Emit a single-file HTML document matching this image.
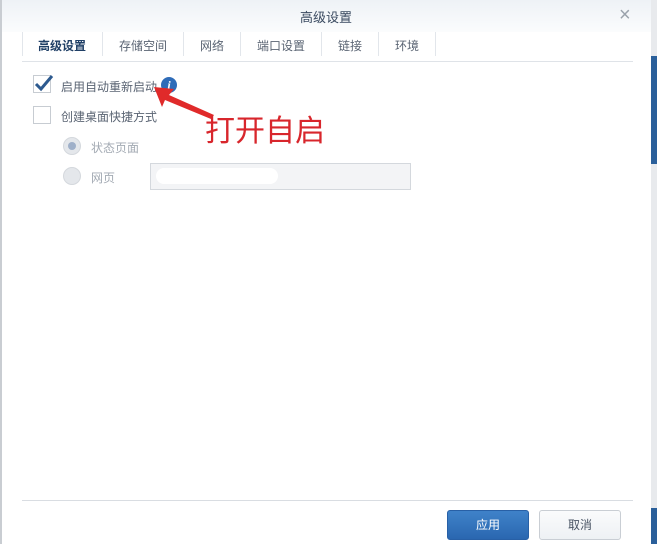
<!DOCTYPE html>
<html><head><meta charset="utf-8"><style>
body{margin:0;width:657px;height:544px;overflow:hidden;background:#fff;font-family:"Liberation Sans","Noto Sans CJK SC",sans-serif;position:relative}
.abs{position:absolute}
.t{font-size:12px;color:#5a6473;white-space:nowrap}
.tab{position:absolute;top:37px;font-size:12px;color:#5a6473}
.sep{position:absolute;top:32px;width:1px;height:24px;background:#e2e6eb}
</style></head><body>
<div class="abs" style="left:0;top:0;width:651px;height:32px;background:linear-gradient(#eef2f6,#fbfcfd)"></div>
<div class="abs" style="left:0;top:0;width:2px;height:544px;background:#c9cdd2"></div>
<div class="abs" style="left:651px;top:0;width:6px;height:544px;background:#e8eaed"></div>
<div class="abs" style="left:651px;top:56px;width:6px;height:108px;background:#2a5f9a"></div>
<div class="abs" style="left:651px;top:508px;width:6px;height:36px;background:#2a5f9a"></div>
<div class="abs t" style="left:300px;top:7px;font-size:13px;color:#3a4a60">高级设置</div>
<div class="abs" style="left:619px;top:4px;font-size:20px;color:#9aa2ab">×</div>
<div class="sep" style="left:22px"></div>
<div class="tab" style="left:38px;color:#1f3f66;font-weight:bold">高级设置</div>
<div class="sep" style="left:102px"></div>
<div class="tab" style="left:119px">存储空间</div>
<div class="sep" style="left:183px"></div>
<div class="tab" style="left:200px">网络</div>
<div class="sep" style="left:240px"></div>
<div class="tab" style="left:257px">端口设置</div>
<div class="sep" style="left:321px"></div>
<div class="tab" style="left:338px">链接</div>
<div class="sep" style="left:378px"></div>
<div class="tab" style="left:395px">环境</div>
<div class="sep" style="left:435px"></div>
<div class="abs" style="left:22px;top:61px;width:611px;height:1px;background:#dfe3e8"></div>
<div class="abs" style="left:33px;top:75px;width:16px;height:16px;border:1px solid #c7ccd2;background:#fff"></div>
<svg class="abs" style="left:33px;top:73px" width="22" height="20"><path d="M3 11 L8 16 L19 3" fill="none" stroke="#2d5a8f" stroke-width="3"/></svg>
<div class="abs t" style="left:61px;top:78px">启用自动重新启动</div>
<div class="abs" style="left:161px;top:77px;width:16px;height:16px;border-radius:50%;background:#2f6cb8;color:#fff;font:italic bold 12px 'Liberation Serif',serif;text-align:center;line-height:16px">i</div>
<div class="abs" style="left:33px;top:106px;width:16px;height:16px;border:1px solid #c7ccd2;background:#fff"></div>
<div class="abs t" style="left:61px;top:108px">创建桌面快捷方式</div>
<div class="abs" style="left:63px;top:137px;width:16px;height:16px;border-radius:50%;background:#e4e7eb;border:1px solid #d4d8dd"></div>
<div class="abs" style="left:68px;top:142px;width:8px;height:8px;border-radius:50%;background:#9fb0c9"></div>
<div class="abs t" style="left:91px;top:139px;color:#a3aab3">状态页面</div>
<div class="abs" style="left:63px;top:167px;width:16px;height:16px;border-radius:50%;background:#e4e7eb;border:1px solid #d4d8dd"></div>
<div class="abs t" style="left:91px;top:169px;color:#a3aab3">网页</div>
<div class="abs" style="left:150px;top:163px;width:259px;height:25px;border:1px solid #d4d8dd;background:#f3f4f6"></div>
<div class="abs" style="left:156px;top:168px;width:122px;height:16px;border-radius:8px;background:#fff"></div>
<svg class="abs" style="left:150px;top:85px" width="70" height="40"><path d="M4 2 L24 4 L19 10 L64 30 L61 34 L15 15 L12 22 Z" fill="#e02a2a"/></svg>
<div class="abs" style="left:205px;top:112px;font-size:30px;line-height:40px;color:#d8262c;white-space:nowrap">打开自启</div>
<div class="abs" style="left:22px;top:500px;width:611px;height:1px;background:#d9dde2"></div>
<div class="abs" style="left:447px;top:510px;width:80px;height:28px;border-radius:3px;background:linear-gradient(#3f82c9,#2a67b0);border:1px solid #2860a6;color:#fff;font-size:12px;text-align:center;line-height:28px">应用</div>
<div class="abs" style="left:539px;top:510px;width:80px;height:28px;border-radius:3px;background:linear-gradient(#fafbfc,#eef1f4);border:1px solid #c9ced4;color:#4a5565;font-size:12px;text-align:center;line-height:28px">取消</div>
</body></html>
